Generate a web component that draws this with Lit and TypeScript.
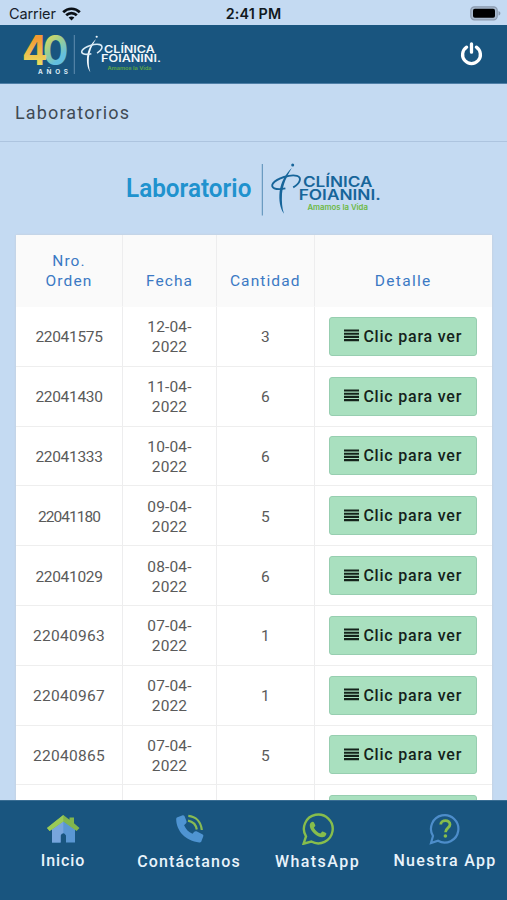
import { LitElement, html, svg, css } from "lit";
import { customElement, property } from "lit/decorators.js";

const fitted = (
  text: string, x: number, y: number, width: number, cls: string
) => svg`<text class=${cls} x=${x} y=${y} textLength=${width} lengthAdjust="spacingAndGlyphs">${text}</text>`;

/** Clinic wordmark: stem with a swoosh, two name lines and the slogan. */
const clinicMark = () => svg`
  <circle cx="22.3" cy="3.2" r="1.5" class="ink"/>
  <path class="ink" d="M21.4 6.2C16 15 12.5 23 11.6 32C11.2 40 11.6 46 13.6 52C9.3 46 8.4 38 9.2 30C10.3 21 15 12 21.4 6.2Z"/>
  <path class="swoosh" d="M15 26.6C5 28.8 -.4 25.8 2.6 21.6C6.6 16.4 20 12.2 26.6 14C32 15.6 29.6 21.6 22.8 25.6"/>
  <g>
    ${fitted("CLÍNICA", 32.5, 25.7, 69.5, "name")}
    ${fitted("FOIANINI.", 28.3, 38.2, 82, "name")}
    ${fitted("Amamos la Vida", 37, 48.4, 60.5, "slogan")}
  </g>`;

@customElement("status-bar")
class StatusBar extends LitElement {
  static styles = css`
    :host { display: grid; grid-template-columns: 1fr auto 1fr; align-items: center; height: 25px; padding: 2px 6px 0 9px; box-sizing: border-box; font: 14.5px/20px Inter, sans-serif; color: #17202a; }
    .carrier { display: flex; align-items: center; gap: 6px; letter-spacing: -.1px; }
    .time { font-size: 14.3px; font-weight: 600; letter-spacing: .15px; margin-right: 3px; color: #101820; }
    .battery { justify-self: end; }
    svg { display: block; }
  `;
  render() {
    return html`
      <div class="carrier">Carrier
        <svg width="19" height="14" viewBox="0 0 19 14" fill="none" stroke="#0b1016" stroke-width="2.7">
          <path d="M1.2 5.2C5.8 .6 13.2 .6 17.8 5.2M4.2 8.3C7.2 5.4 11.8 5.4 14.8 8.3"/>
          <path d="M9.5 13.5L6.6 10.5C8.2 9 10.8 9 12.4 10.5Z" fill="#0b1016" stroke="none"/>
        </svg>
      </div>
      <div class="time">2:41 PM</div>
      <svg class="battery" width="31" height="15" viewBox="0 0 31 15">
        <rect x=".8" y=".8" width="26.4" height="13" rx="3.6" fill="#a9bace" stroke="#8b9aae" stroke-width="1.2"/>
        <rect x="3" y="2.8" width="22" height="9" rx="1.8" fill="#000"/>
        <path d="M28.5 5C31 5.8 31 8.8 28.5 9.6Z" fill="#8b9aae"/>
      </svg>`;
  }
}

@customElement("app-header")
class AppHeader extends LitElement {
  static styles = css`
    :host { display: flex; justify-content: space-between; align-items: flex-start; height: 59px; box-sizing: border-box; padding: 7px 23px 0 20px; background: #19557f; border-bottom: 1px solid #4e7fa7; }
    .power { margin-top: 9px; }
    svg { display: block; overflow: visible; }
    .ink, .name { fill: #f2f8fc; }
    .swoosh { fill: none; stroke: #d9ebf6; stroke-width: 2.2; }
    .name { font: 600 14.4px Inter, sans-serif; }
    .slogan { font: 600 7.4px Inter, sans-serif; fill: #5fa843; }
    .digit { font: 700 40.5px Inter, sans-serif; }
    .years { font: 700 6.4px Inter, sans-serif; fill: #dcebf5; }
  `;
  render() {
    return html`
      <svg width="145" height="46" viewBox="20 32 145 46">
        <defs>
          <linearGradient id="warm" x1="0" y1="0" x2="0" y2="1">
            <stop offset=".25" stop-color="#f49a32"/><stop offset=".8" stop-color="#e9dd62"/>
          </linearGradient>
          <linearGradient id="cool" x1="0" y1="0" x2=".5" y2="1">
            <stop offset=".2" stop-color="#e4d75a"/><stop offset=".5" stop-color="#9bcf91"/><stop offset=".8" stop-color="#63bfe0"/>
          </linearGradient>
        </defs>
        <text class="digit" x="42.8" y="65" textLength="25.6" lengthAdjust="spacingAndGlyphs" fill="url(#cool)">0</text>
        <text class="digit" x="22" y="65" textLength="25.5" lengthAdjust="spacingAndGlyphs" fill="url(#warm)">4</text>
        <text class="years" x="38" y="73.7" textLength="30">AÑOS</text>
        <path d="M74.3 35V74" stroke="#5f8caf"/>
        <g transform="translate(80.4 34.4) scale(.73)">${clinicMark()}</g>
      </svg>
      <svg class="power" width="25" height="26" viewBox="0 0 25 26" fill="none" stroke="#fff" stroke-width="3.3" stroke-linecap="round">
        <path d="M7.6 6.2A8.9 8.9 0 1 0 17.4 6.2M12.5 3V11.2"/>
      </svg>`;
  }
}

@customElement("lab-banner")
class LabBanner extends LitElement {
  static styles = css`
    :host { display: flex; justify-content: center; padding-top: 18px; height: 75px; }
    svg { overflow: visible; }
    .ink, .name { fill: #17659a; }
    .swoosh { fill: none; stroke: #17659a; stroke-width: 1.9; }
    .name { font: 600 14.4px Inter, sans-serif; }
    .slogan { font: 600 7.4px Inter, sans-serif; fill: #6cb944; }
    .title { font: 600 26px Roboto, sans-serif; fill: #2092ce; }
  `;
  render() {
    return html`
      <svg width="257" height="58" viewBox="125 160 257 58">
        ${fitted("Laboratorio", 126, 197, 125.4, "title")}
        <path d="M262.3 164V215.5" stroke="#568bb5"/>
        <g transform="translate(270.4 161.8)">${clinicMark()}</g>
      </svg>`;
  }
}

type Order = { id: string; day: string; year: string; count: string };

/** Narrow "1" glyphs tighten the whole order number. */
const idSpacing = (id: string) => 0.3 - 0.62 * (id.split("1").length - 1);

@customElement("orders-table")
class OrdersTable extends LitElement {
  static styles = css`
    :host { display: block; margin: 0 15px 0 16px; font: 15.5px/20px Roboto, sans-serif; color: #5a5a5a; background: #fff; box-shadow: 0 0 2px #c5cad2; }
    .row { display: grid; grid-template-columns: 107px 94px 97.5px 1fr; height: 59.8px; }
    .head { height: 72px; background: #fafafa; color: #3b79c4; letter-spacing: 1.1px; }
    .cell { box-sizing: border-box; display: flex; align-items: center; justify-content: center; text-align: center; padding-top: 2px; border-right: 1px solid #ededee; border-bottom: 1px solid #eee; }
    .cell:last-child { border-right: 0; padding-top: 0; }
    .head .cell { align-items: flex-end; padding-bottom: 15px; border-bottom-color: #fafafa; }
    .date { letter-spacing: .15px; }
    .detail { letter-spacing: 1.3px; }
    .view { box-sizing: border-box; width: 148px; height: 39px; display: flex; align-items: center; justify-content: center; gap: 4px; border: 1px solid #97ceb0; border-radius: 3px; background: #a9e0bf; color: #15231b; font: 500 16px/20px Roboto, sans-serif; letter-spacing: .78px; padding: 1px 0 0; }
    .view svg { margin-top: -2px; }
  `;
  @property({ attribute: false }) orders: Order[] = [];
  render() {
    return html`
      <div class="row head">
        <div class="cell">Nro.<br>Orden</div>
        <div class="cell">Fecha</div>
        <div class="cell">Cantidad</div>
        <div class="cell detail">Detalle</div>
      </div>
      ${this.orders.map(({ id, day, year, count }) => html`
        <div class="row">
          <div class="cell" style="letter-spacing:${idSpacing(id)}px">${id}</div>
          <div class="cell date">${day}<br>${year}</div>
          <div class="cell">${count}</div>
          <div class="cell">
            <button class="view">
              <svg width="15" height="13" viewBox="0 0 15 13" fill="none" stroke="#15231b" stroke-width="2.1"><path d="M0 1.5H15M0 4.7H15M0 7.9H15M0 11.1H15"/></svg>
              ${id ? html`<span>Clic para ver</span>` : ""}
            </button>
          </div>
        </div>`)}`;
  }
}

@customElement("tab-bar")
class TabBar extends LitElement {
  static styles = css`
    :host { display: grid; grid-template-columns: 126px 126px 131px 124px; height: 100px; background: #19557f; border-top: 1px solid #396d93; box-sizing: border-box; color: #e8f3fb; font: 500 16px/20px Roboto, sans-serif; letter-spacing: .9px; }
    .tab { display: flex; flex-direction: column; align-items: center; padding-top: 12px; gap: 6px; white-space: nowrap; }
    .phone { letter-spacing: 1.15px; }
    .phone, .chat { gap: 7px; }
    .chat { letter-spacing: 1.45px; }
    .app { letter-spacing: 1.3px; }
    svg { display: block; }
  `;
  render() {
    return html`
      <div class="tab">
        <svg width="34" height="32" viewBox="0 0 34 32">
          <path d="M6 16L17.3 8L29 16V29.5H20V22.5Q17.3 18 14.6 22.5V29.5H6Z" fill="#5a97d3"/>
          <path d="M6 16L17.3 8V20Q15 20 14.6 22.5V29.5H6Z" fill="#78a5dc"/>
          <path d="M1 15L17.3 2L23.5 6.8V4.5H28V10.2L33.5 15L30.6 18L17.3 8.5L3.6 18Z" fill="#82b64c"/>
          <path d="M1 15L17.3 2V8.5L3.6 18Z" fill="#9aca58"/>
        </svg>
        <span>Inicio</span>
      </div>
      <div class="tab phone">
        <svg width="32" height="32" viewBox="0 0 32 32">
          <path d="M3 4.2L8.2 2.2C9.5 2 10 2.8 10.3 3.8L12 8.3C12.3 9.6 11.7 10.2 10.8 11L9.6 12.2C11.4 16.4 14 19 18 20.8L19.5 19C20.4 18 21 18 22 18.3L27.8 21.2C29 21.8 29 22.5 28.7 23.5L27 28C26.6 29.3 26 29.6 24.8 29.4C11 28 2 18 1.7 6.5C1.7 5.2 2 4.6 3 4.2Z" fill="#4f94d2" transform="translate(1.5 0)"/>
          <path d="M15.3 2.8C23 3.5 28 9 28.8 17M15 7.6C20 8.5 23 12 23.8 16.5" fill="none" stroke="#88bb53" stroke-width="2.2"/>
        </svg>
        <span>Contáctanos</span>
      </div>
      <div class="tab chat">
        <svg width="32" height="32" viewBox="0 0 32 32">
          <path d="M1.6 30.7L4 23.4A14.4 14.4 0 1 1 9.3 28.5Z" fill="none" stroke="#87bd4c" stroke-width="2.4"/>
          <path d="M9 9.4C10.6 8.3 11.5 8.6 12.1 9.7L13.3 12.3C13.5 13.2 12.5 14 11.9 14.7C13.4 17.6 15.5 19.5 18.4 20.6L20.2 18.5C20.9 18.2 22.5 19.1 24 20C25 20.8 23.5 23.3 22.5 23.7C17 26 8.4 19 7.8 13C7.7 11.2 8 10.2 9 9.4Z" fill="#87bd4c"/>
        </svg>
        <span>WhatsApp</span>
      </div>
      <div class="tab app">
        <svg width="32" height="32" viewBox="0 0 32 32" fill="none">
          <path d="M2 30L4 23A13.7 13.7 0 1 1 9 27.8Z" stroke="#4d8dca" stroke-width="2.2"/>
          <path d="M11.7 11.5C11.9 6.4 21 6.4 21 11.6C21 15 16.5 14.8 16.5 19.3" stroke="#87bd4c" stroke-width="2.8"/>
          <circle cx="16.4" cy="23" r="1.8" fill="#87bd4c"/>
        </svg>
        <span>Nuestra App</span>
      </div>`;
  }
}

const order = (id: string, day: string, count: number): Order =>
  ({ id, day, year: "2022", count: String(count) });

@customElement("app-root")
class AppRoot extends LitElement {
  static styles = css`
    :host { display: flex; flex-direction: column; height: 900px; background: #c4daf2; overflow: hidden; }
    .heading { height: 58px; box-sizing: border-box; padding: 18px 15px 0; border-bottom: 1px solid #adc4df; font: 450 18px/22px Roboto, sans-serif; color: #404a54; letter-spacing: 1.15px; }
    .content { flex: 1; min-height: 0; overflow: hidden; }
  `;
  private orders: Order[] = [
    order("22041575", "12-04-", 3), order("22041430", "11-04-", 6),
    order("22041333", "10-04-", 6), order("22041180", "09-04-", 5),
    order("22041029", "08-04-", 6), order("22040963", "07-04-", 1),
    order("22040967", "07-04-", 1), order("22040865", "07-04-", 5),
    { id: "", day: "", year: "", count: "" },
  ];
  render() {
    return html`
      <status-bar></status-bar>
      <app-header></app-header>
      <div class="heading">Laboratorios</div>
      <div class="content">
        <lab-banner></lab-banner>
        <orders-table .orders=${this.orders}></orders-table>
      </div>
      <tab-bar></tab-bar>`;
  }
}
